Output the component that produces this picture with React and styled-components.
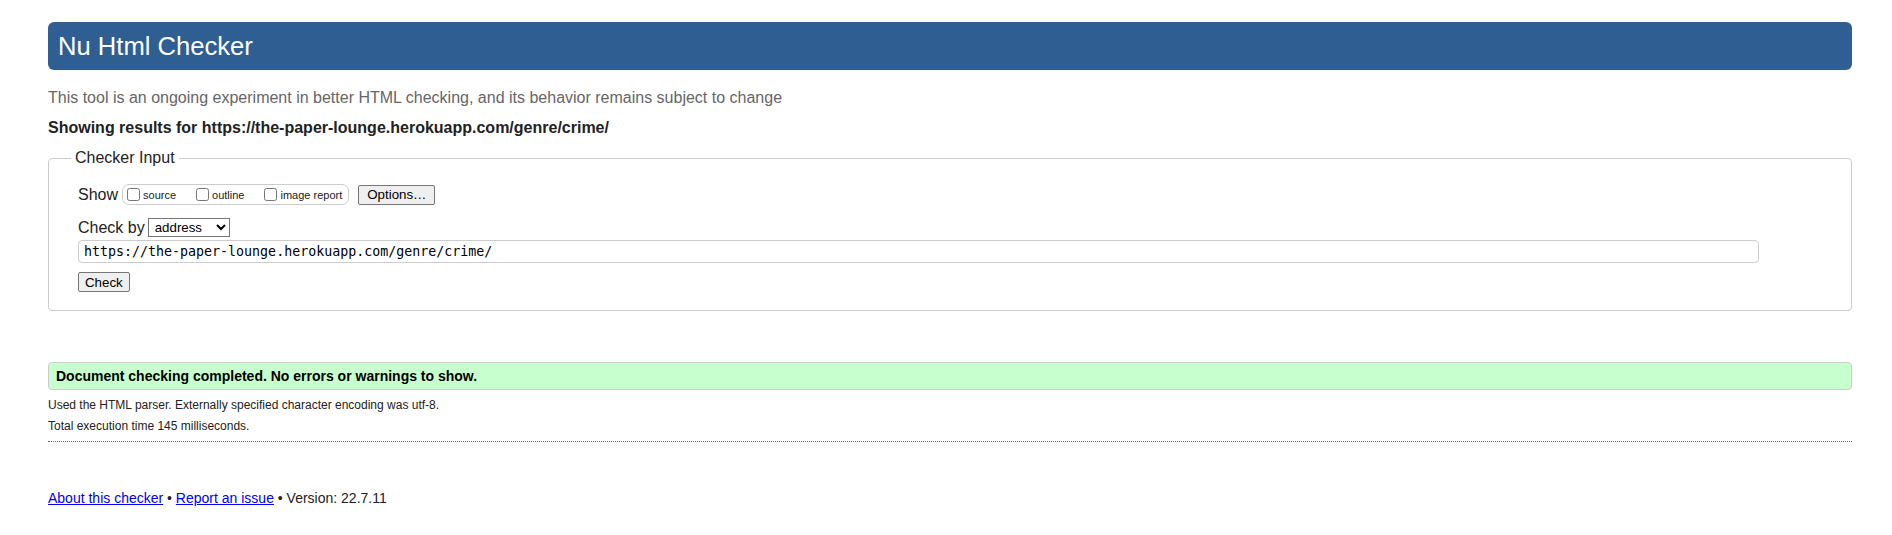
import React from "react";
import styled, { createGlobalStyle } from "styled-components";

const GlobalStyle = createGlobalStyle`
  html, body {
    margin: 0;
    padding: 0;
    background: #fff;
  }
  body {
    font-family: "Liberation Sans", Arial, sans-serif;
    color: #222;
  }
`;

const Page = styled.div`
  padding: 22px 40px 24px 48px;
`;

const Banner = styled.h1`
  margin: 0;
  height: 48px;
  display: flex;
  align-items: center;
  padding: 0 10px;
  background: #2f5e93;
  color: #fff;
  border-radius: 6px;
  font-size: 25.6px;
  font-weight: normal;
`;

const Tagline = styled.p`
  margin: 18px 0 0;
  font-size: 16px;
  line-height: 20px;
  color: #666;
`;

const ResultsFor = styled.p`
  margin: 10px 0 0;
  font-size: 16px;
  line-height: 20px;
  font-weight: bold;
  color: #222;
`;

const Fieldset = styled.fieldset`
  margin: 11px 0 0;
  padding: 17px 0 18px 16px;
  border: 1px solid #ccc;
  border-radius: 4px;
`;

const Legend = styled.legend`
  margin-left: 6px;
  padding: 0 4px;
  font-size: 16px;
  color: #222;
`;

const Inner = styled.div`
  padding-left: 13px;
`;

const Row = styled.div`
  display: flex;
  align-items: center;
  margin-top: ${(p) => p.$top || 0}px;
  font-size: 16px;
`;

const CheckGroup = styled.span`
  display: inline-flex;
  align-items: center;
  gap: 20px;
  height: 19px;
  padding: 0 6px 0 4px;
  margin-left: 4px;
  border: 1px solid #ccc;
  border-radius: 7px;
`;

const CheckLabel = styled.label`
  display: inline-flex;
  align-items: center;
  font-size: 11px;
  color: #222;
`;

const Box = styled.input`
  margin: 0 3px 0 0;
  width: 13px;
  height: 13px;
`;

const Button = styled.button`
  font-family: "Liberation Sans", Arial, sans-serif;
  font-size: 13.3px;
  height: 20px;
  padding: 0 ${(p) => p.$pad || 6}px;
  background: #efefef;
  color: #000;
  border: 1px solid #767676;
  border-radius: 2px;
  margin-left: ${(p) => p.$left || 0}px;
`;

const Select = styled.select`
  font-family: "Liberation Sans", Arial, sans-serif;
  font-size: 13.3px;
  height: 19px;
  width: 82px;
  margin-left: 3px;
  padding: 0 2px;
  background: #fff;
  color: #000;
  border: 1px solid #767676;
  border-radius: 0;
`;

const UrlInput = styled.input`
  display: block;
  box-sizing: border-box;
  margin-top: 3px;
  width: 1681px;
  height: 23px;
  padding: 0 5px;
  font-family: "DejaVu Sans Mono", "Liberation Mono", monospace;
  font-size: 13.3px;
  color: #000;
  border: 1px solid #ccc;
  border-radius: 4px;
`;

const Success = styled.div`
  margin-top: 51px;
  box-sizing: border-box;
  height: 28px;
  display: flex;
  align-items: center;
  padding: 0 7px;
  background: #c8ffcf;
  border: 1px solid #ccc;
  border-radius: 4px;
  font-size: 14px;
  font-weight: bold;
  color: #000;
`;

const Detail = styled.p`
  margin: ${(p) => p.$top || 0}px 0 0;
  font-size: 12px;
  line-height: 15px;
  color: #222;
`;

const Rule = styled.hr`
  margin: 7px 0 0;
  border: 0;
  border-top: 1px dotted #666;
`;

const Footer = styled.p`
  margin: 47px 0 0;
  font-size: 14px;
  line-height: 18px;
  color: #222;
`;

const Link = styled.a`
  color: #00e;
  text-decoration: underline;
`;

export default function App() {
  const url = "https://the-paper-lounge.herokuapp.com/genre/crime/";
  return (
    <>
      <GlobalStyle />
      <Page>
        <Banner>Nu Html Checker</Banner>
        <Tagline>
          This tool is an ongoing experiment in better HTML checking, and its
          behavior remains subject to change
        </Tagline>
        <ResultsFor>Showing results for {url}</ResultsFor>

        <Fieldset>
          <Legend>Checker Input</Legend>
          <Inner>
            <Row>
              Show
              <CheckGroup>
                <CheckLabel>
                  <Box type="checkbox" />
                  source
                </CheckLabel>
                <CheckLabel>
                  <Box type="checkbox" />
                  outline
                </CheckLabel>
                <CheckLabel>
                  <Box type="checkbox" />
                  image report
                </CheckLabel>
              </CheckGroup>
              <Button $left={9} $pad={8}>Options…</Button>
            </Row>
            <Row $top={13}>
              Check by
              <Select defaultValue="address">
                <option value="address">address</option>
                <option value="file">file upload</option>
                <option value="text">text input</option>
              </Select>
            </Row>
            <UrlInput type="url" defaultValue={url} />
            <Row $top={9}>
              <Button>Check</Button>
            </Row>
          </Inner>
        </Fieldset>

        <Success>Document checking completed. No errors or warnings to show.</Success>
        <Detail $top={8}>
          Used the HTML parser. Externally specified character encoding was
          utf-8.
        </Detail>
        <Detail $top={6}>Total execution time 145 milliseconds.</Detail>
        <Rule />

        <Footer>
          <Link href="#">About this checker</Link> •{" "}
          <Link href="#">Report an issue</Link> • Version: 22.7.11
        </Footer>
      </Page>
    </>
  );
}
